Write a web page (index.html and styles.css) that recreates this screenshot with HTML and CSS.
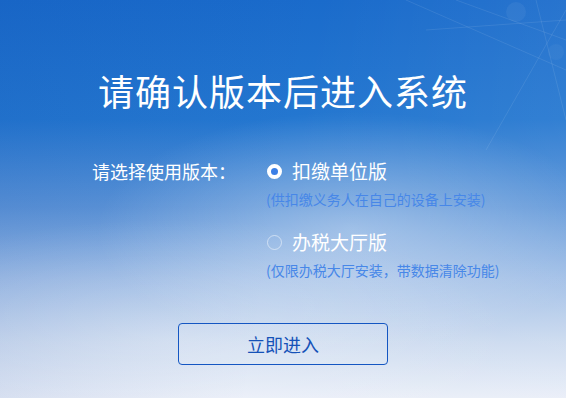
FILE: index.html
```html
<!DOCTYPE html>
<html lang="zh-CN">
<head>
  <meta charset="UTF-8" />
  <meta name="viewport" content="width=device-width, initial-scale=1.0"/>
  <title>选择版本</title>
  <link rel="stylesheet" href="styles.css">
</head>
<body>

  <section class="page">
    <!-- 右上角的网状光线 -->
    <svg class="mesh" width="200" height="150" viewBox="0 0 200 150">
      <g stroke="#ffffff" stroke-opacity="0.09" stroke-width="1" fill="none">
        <path d="M40 0 L200 70"/>
        <path d="M90 0 L200 40"/>
        <path d="M200 10 L120 150"/>
        <path d="M170 0 L200 120"/>
        <path d="M60 30 L200 20"/>
      </g>
      <circle cx="150" cy="12" r="10" fill="#ffffff" fill-opacity="0.05"/>
      <circle cx="190" cy="52" r="8" fill="#ffffff" fill-opacity="0.04"/>
    </svg>

    <h1>请确认版本后进入系统</h1>

    <div class="form">
      <div class="label">请选择使用版本：</div>
      <div class="options">
        <label class="option">
          <span class="radio checked"></span>
          <span class="name">扣缴单位版</span>
        </label>
        <p class="hint">(供扣缴义务人在自己的设备上安装)</p>

        <label class="option second">
          <span class="radio"></span>
          <span class="name">办税大厅版</span>
        </label>
        <p class="hint">(仅限办税大厅安装，带数据清除功能)</p>
      </div>
    </div>

    <button class="enter">立即进入</button>
  </section>

  <script>
    // 单选切换
    const options = document.querySelectorAll('.option');
    options.forEach(opt => {
      opt.addEventListener('click', () => {
        options.forEach(o => o.querySelector('.radio').classList.remove('checked'));
        opt.querySelector('.radio').classList.add('checked');
      });
    });
  </script>

</body>
</html>
```

FILE: styles.css
```css
* { margin: 0; padding: 0; box-sizing: border-box; }
html, body {
  height: 100%;
  overflow: hidden;
  font-family: "Noto Sans CJK SC", "Liberation Sans", sans-serif;
}

/* 背景：上深蓝，往下渐白 */
.page {
  position: relative;
  height: 100vh;
  display: flex;
  flex-direction: column;
  align-items: center;
  color: #fff;
  background:
    radial-gradient(ellipse 45% 30% at 62% 58%, rgba(255,255,255,0.32), rgba(255,255,255,0) 100%),
    radial-gradient(ellipse 60% 30% at 30% 85%, rgba(255,255,255,0.25), rgba(255,255,255,0) 100%),
    linear-gradient(100deg, rgba(10,60,160,0.12), rgba(255,255,255,0) 50%, rgba(255,255,255,0.08)),
    linear-gradient(to bottom, #1a6bcb 0%, #2477d0 30%, #5d95d8 52%, #9ebde6 70%, #cbdaef 86%, #e9eef8 100%);
}

.mesh {
  position: absolute;
  top: 0;
  right: 0;
  pointer-events: none;
}

.page h1 {
  padding-top: 68px;
  font-size: 36px;
  line-height: 44px;
  font-weight: normal;
  letter-spacing: 1px;
}

/* 选项区域 */
.form {
  align-self: flex-start;
  margin: 47px 0 0 92px;
  display: flex;
}
.label {
  width: 174px;
  font-size: 18px;
  line-height: 24px;
}
.option {
  display: flex;
  align-items: center;
  cursor: pointer;
}
.option.second {
  margin-top: 21px;
}
.radio {
  width: 15px;
  height: 15px;
  margin-left: 1px;
  margin-right: 10px;
  border-radius: 50%;
  border: 1px solid rgba(255,255,255,0.5);
}
.radio.checked {
  border: 4px solid #fff;
  background: #3b7fe6;
}
.name {
  font-size: 19px;
  line-height: 24px;
}
.hint {
  margin-top: 6px;
  font-size: 14px;
  line-height: 20px;
  color: #4787e8;
}

/* 按钮 */
.enter {
  margin-top: 43px;
  width: 210px;
  height: 42px;
  border: 1px solid #1456c2;
  border-radius: 4px;
  background: rgba(255,255,255,0.08);
  color: #1552b8;
  font-family: inherit;
  font-size: 18px;
  cursor: pointer;
}
.enter:hover {
  background: rgba(255,255,255,0.25);
}
```
